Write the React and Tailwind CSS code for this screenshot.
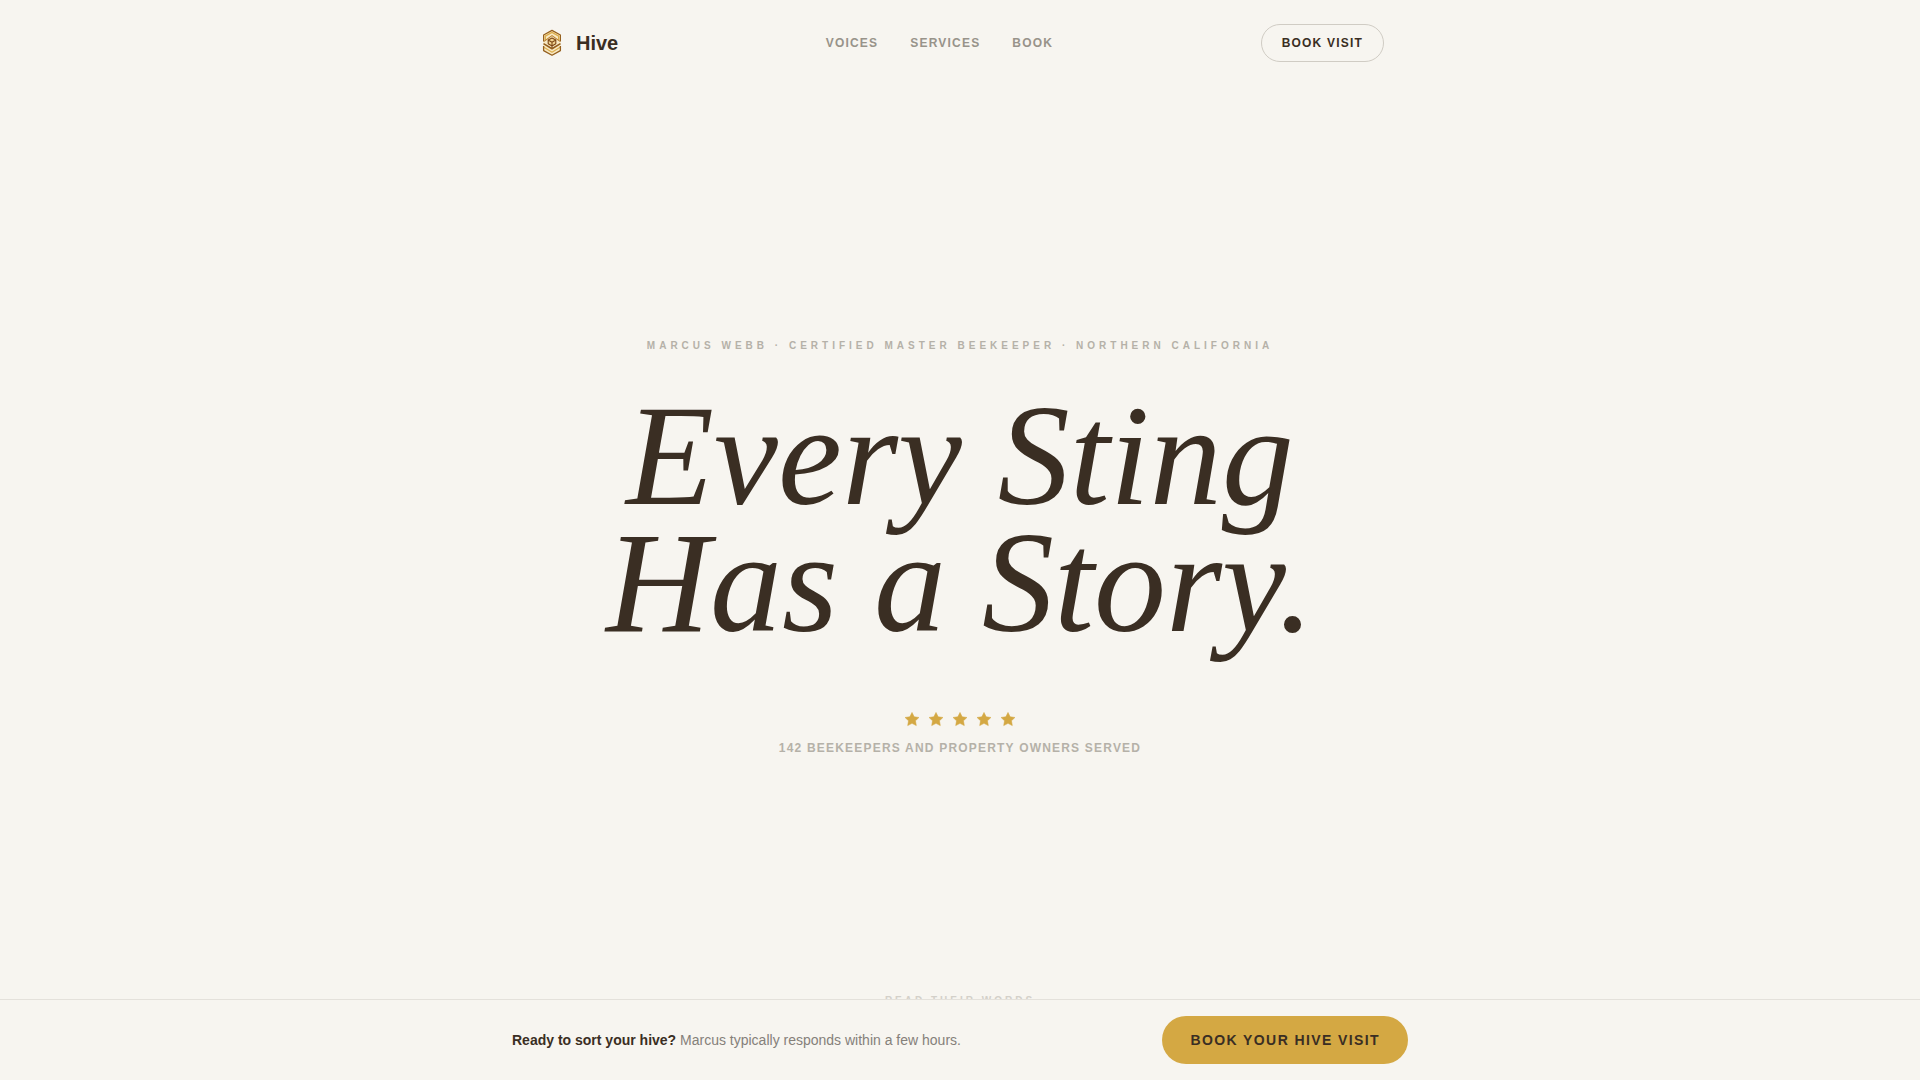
import React from 'react';

const navLinks = [
  { label: 'Voices', href: '#voices' },
  { label: 'Services', href: '#services' },
  { label: 'Book', href: '#book' },
];

const HiveLogo = () => (
  <svg viewBox="0 0 32 32" className="w-8 h-8" fill="none" strokeLinejoin="round" aria-hidden="true">
    <path d="M16 3 L24.6 7.8 V23.8 L16 28.8 L7.4 23.8 V7.8 Z" fill="#f8e9c4" />
    <path d="M7.6 14.5 V8 L16 3.4 L24.4 8 V14.5" stroke="#95601f" strokeWidth="1.2" />
    <path d="M9.3 13 V9.2 L16 5.4 L22.7 9.2 V13" stroke="#dcae4e" strokeWidth="1.4" />
    <path d="M8 14.4 L16 8.6 L24 14.4" stroke="#b9802f" strokeWidth="1.1" />
    <path d="M7.5 16.6 L16 21.8 L24.5 16.6" stroke="#95601f" strokeWidth="1.6" />
    <path d="M7.5 20 L16 25.2 L24.5 20" stroke="#dcae4e" strokeWidth="1.2" />
    <path d="M7.6 19 V23.6 L16 28.2 L24.4 23.6 V19" stroke="#95601f" strokeWidth="1.3" />
    <path d="M16 11 L19.8 13 V16.8 L16 19 L12.2 16.8 V13 Z" fill="#f1d592" />
    <path d="M16 11 L19.8 13 V16.8 L16 19 L12.2 16.8 V13 Z M12.2 13 L16 15.2 L19.8 13 M16 15.2 V21" stroke="#7d4716" strokeWidth="1.1" />
  </svg>
);

const Star = () => (
  <svg viewBox="-1 -1 26 26" className="w-[18px] h-[18px]" fill="#d4a843" stroke="#d4a843" strokeWidth="0.8" strokeLinejoin="round" aria-hidden="true">
    <path d="M12 2.5 L15.1 8.8 L22 9.8 L17 14.6 L18.2 21.5 L12 18.3 L5.8 21.5 L7 14.6 L2 9.8 L8.9 8.8 Z" />
  </svg>
);

const Header = () => (
  <header className="w-full max-w-4xl mx-auto px-6 py-6 flex items-center justify-between">
    <a href="#top" className="flex items-center gap-2">
      <HiveLogo />
      <span className="text-xl font-bold">Hive</span>
    </a>
    <nav className="flex gap-8">
      {navLinks.map((link) => (
        <a key={link.href} href={link.href} className="text-xs font-bold uppercase tracking-widest text-[#98938a]">
          {link.label}
        </a>
      ))}
    </nav>
    <button type="button" className="rounded-full border border-[#d0ccc4] px-5 py-[10px] text-xs font-bold uppercase tracking-widest">
      Book Visit
    </button>
  </header>
);

const Hero = () => (
  <main id="top" className="flex-1 flex flex-col items-center justify-center px-6 pt-[14px] text-center">
    <p className="text-[10px] leading-[15px] font-bold uppercase tracking-[4px] text-[#b5b1a8]">
      Marcus Webb · Certified Master Beekeeper · Northern California
    </p>
    <h1 className="mt-[39px] font-['Liberation_Serif',serif] italic text-[144px] leading-[127px]">
      Every Sting
      <br />
      Has a Story.
    </h1>
    <div className="mt-16 flex gap-[6px]" role="img" aria-label="Five stars">
      {[1, 2, 3, 4, 5].map((n) => (
        <Star key={n} />
      ))}
    </div>
    <p className="mt-3 text-xs font-bold uppercase tracking-widest text-[#b5b1a8]">
      142 beekeepers and property owners served
    </p>
  </main>
);

const BookingBar = () => (
  <div className="fixed inset-x-0 bottom-0 border-t border-[#e4e1db] bg-[#f7f5f0]">
    <div className="max-w-4xl mx-auto py-4 flex items-center justify-between">
      <p className="text-sm text-[#85807a]">
        <strong className="font-bold text-[#3a2e23]">Ready to sort your hive?</strong> Marcus typically responds within a few hours.
      </p>
      <button type="button" className="h-12 rounded-full bg-[#d4a843] px-7 text-sm font-bold uppercase tracking-widest">
        Book Your Hive Visit
      </button>
    </div>
  </div>
);

export default function App() {
  return (
    <div className="min-h-screen flex flex-col bg-[#f7f5f0] text-[#3a2e23] font-['Liberation_Sans',sans-serif]">
      <Header />
      <Hero />
      <p className="pb-[72px] text-center text-[10px] leading-[15px] font-bold uppercase tracking-[3px] text-[#d3d0c9]">
        Read their words
      </p>
      <BookingBar />
    </div>
  );
}
